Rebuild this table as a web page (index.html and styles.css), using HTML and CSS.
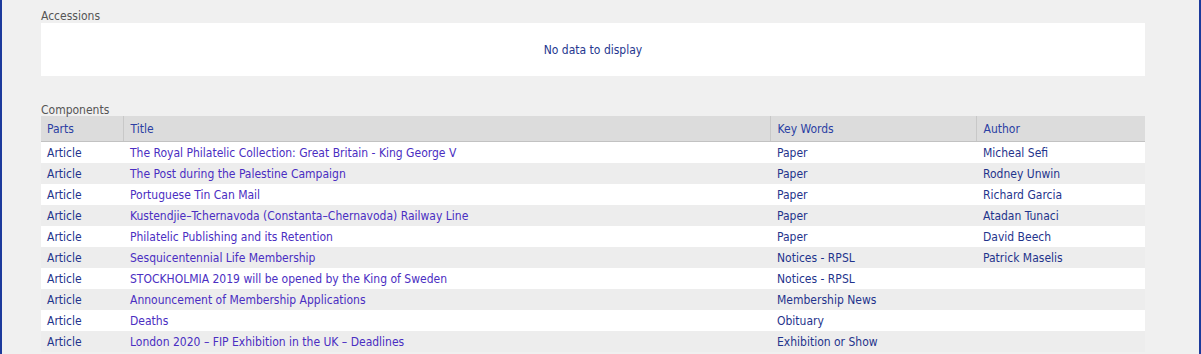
FILE: index.html
```html
<!DOCTYPE html>
<html>
<head>
<meta charset="utf-8">
<link rel="stylesheet" href="styles.css">
</head>
<body>
<div class="page">
  <section class="block accessions">
    <div class="label">Accessions</div>
    <div class="empty">No data to display</div>
  </section>
  <section class="block components">
    <div class="label">Components</div>
    <table class="grid">
      <colgroup>
        <col class="c-parts"><col class="c-title"><col class="c-key"><col class="c-author">
      </colgroup>
      <thead>
        <tr><th>Parts</th><th>Title</th><th>Key Words</th><th>Author</th></tr>
      </thead>
      <tbody>
        <tr><td>Article</td><td class="t">The Royal Philatelic Collection: Great Britain - King George V</td><td>Paper</td><td>Micheal Sefi</td></tr>
        <tr><td>Article</td><td class="t">The Post during the Palestine Campaign</td><td>Paper</td><td>Rodney Unwin</td></tr>
        <tr><td>Article</td><td class="t">Portuguese Tin Can Mail</td><td>Paper</td><td>Richard Garcia</td></tr>
        <tr><td>Article</td><td class="t">Kustendjie–Tchernavoda (Constanta–Chernavoda) Railway Line</td><td>Paper</td><td>Atadan Tunaci</td></tr>
        <tr><td>Article</td><td class="t">Philatelic Publishing and its Retention</td><td>Paper</td><td>David Beech</td></tr>
        <tr><td>Article</td><td class="t">Sesquicentennial Life Membership</td><td>Notices - RPSL</td><td>Patrick Maselis</td></tr>
        <tr><td>Article</td><td class="t">STOCKHOLMIA 2019 will be opened by the King of Sweden</td><td>Notices - RPSL</td><td></td></tr>
        <tr><td>Article</td><td class="t">Announcement of Membership Applications</td><td>Membership News</td><td></td></tr>
        <tr><td>Article</td><td class="t">Deaths</td><td>Obituary</td><td></td></tr>
        <tr><td>Article</td><td class="t">London 2020 – FIP Exhibition in the UK – Deadlines</td><td>Exhibition or Show</td><td></td></tr>
      </tbody>
    </table>
  </section>
</div>
</body>
</html>
```
FILE: styles.css
```css
html, body {
  margin: 0;
  padding: 0;
  height: 100%;
  overflow: hidden;
}
body {
  background: #f0f0f0;
  font-family: "DejaVu Sans Condensed", "DejaVu Sans", sans-serif;
  font-size: 12px;
  color: #2b3990;
}
.page {
  box-sizing: border-box;
  height: 354px;
  border-left: 2px solid #1c3a9c;
  border-right: 2px solid #1c3a9c;
  padding: 8px 54px 0 39px;
}
.label {
  color: #555555;
  height: 15px;
  line-height: 17px;
}
.components .label {
  line-height: 19px;
}
.empty {
  background: #ffffff;
  height: 53px;
  line-height: 55px;
  text-align: center;
  color: #26378f;
}
.components {
  margin-top: 25px;
}
.grid {
  width: 1104px;
  border-collapse: collapse;
  table-layout: fixed;
}
.c-parts { width: 82px; }
.c-title { width: 647px; }
.c-key { width: 206px; }
.c-author { width: 169px; }
.grid th {
  background: #dcdcdc;
  font-weight: normal;
  text-align: left;
  height: 25px;
  padding: 2px 6px 0 7px;
  color: #2b3fa3;
  border-left: 1px solid #c8c8c8;
  border-bottom: 1px solid #c2c2c2;
  box-sizing: border-box;
}
.grid th:first-child { border-left: none; padding-left: 6px; }
.grid td {
  height: 20px;
  padding: 1px 6px 0 7px;
  white-space: nowrap;
  color: #1f348c;
}
.grid td:first-child { padding-left: 6px; }
.grid td.t { color: #4a2ec2; }
.grid tbody tr:nth-child(odd) { background: #ffffff; }
.grid tbody tr:nth-child(even) { background: #ededed; }
```
